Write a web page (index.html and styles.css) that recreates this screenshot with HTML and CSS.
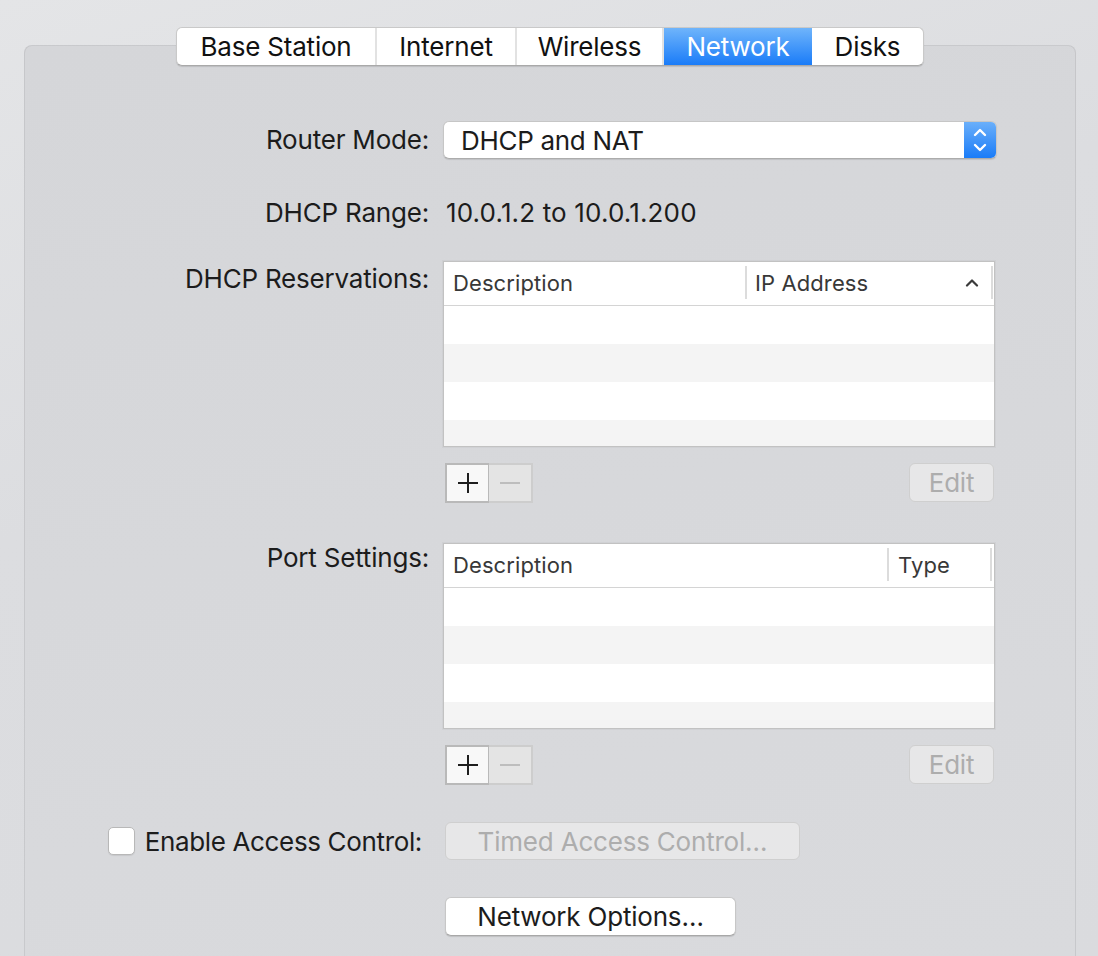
FILE: index.html
```html
<!DOCTYPE html>
<html lang="en">
<head>
<meta charset="utf-8">
<title>Network</title>
<link rel="stylesheet" href="styles.css">
</head>
<body>
<div class="window">
  <nav class="tabs">
    <span class="tab">Base Station</span>
    <span class="tab">Internet</span>
    <span class="tab">Wireless</span>
    <span class="tab tab-active">Network</span>
    <span class="tab tab-last">Disks</span>
  </nav>
  <section class="panel">
    <div class="row row-router">
      <div class="lbl">Router Mode:</div>
      <div class="select">
        <span class="select-text">DHCP and NAT</span>
        <span class="select-arrows">
          <svg width="14" height="26" viewBox="0 0 14 26"><path d="M2 8 L7 3 L12 8" fill="none" stroke="#fff" stroke-width="2.4" stroke-linecap="round" stroke-linejoin="round"/><path d="M2 18 L7 23 L12 18" fill="none" stroke="#fff" stroke-width="2.4" stroke-linecap="round" stroke-linejoin="round"/></svg>
        </span>
      </div>
    </div>

    <div class="row row-range">
      <div class="lbl">DHCP Range:</div>
      <div class="value">10.0.1.2 to 10.0.1.200</div>
    </div>

    <div class="row row-table row-res">
      <div class="lbl lbl-res">DHCP Reservations:</div>
      <div class="table-block">
        <div class="table">
          <div class="thead">
            <div class="th th-desc th-desc-res">Description</div>
            <div class="th th-ip">IP Address
              <svg class="caret" width="14" height="9" viewBox="0 0 14 9"><path d="M2 7.5 L7 2.5 L12 7.5" fill="none" stroke="#3a3a3a" stroke-width="2.2" stroke-linecap="round" stroke-linejoin="round"/></svg>
            </div>
            <div class="th th-end"></div>
          </div>
          <div class="tr"></div>
          <div class="tr tr-alt"></div>
          <div class="tr"></div>
          <div class="tr tr-alt tr-part"></div>
        </div>
        <div class="controls">
          <div class="pm">
            <span class="pm-btn pm-add">
              <svg width="24" height="24" viewBox="0 0 24 24"><path d="M12 2 V22 M2 12 H22" stroke="#1e1e1e" stroke-width="2"/></svg>
            </span>
            <span class="pm-btn pm-remove">
              <svg width="24" height="24" viewBox="0 0 24 24"><path d="M2 12 H22" stroke="#bdbdbd" stroke-width="2"/></svg>
            </span>
          </div>
          <span class="btn btn-disabled btn-edit">Edit</span>
        </div>
      </div>
    </div>

    <div class="row row-table row-port">
      <div class="lbl lbl-port">Port Settings:</div>
      <div class="table-block">
        <div class="table">
          <div class="thead">
            <div class="th th-desc th-desc-port">Description</div>
            <div class="th th-type">Type</div>
            <div class="th th-end"></div>
          </div>
          <div class="tr"></div>
          <div class="tr tr-alt"></div>
          <div class="tr"></div>
          <div class="tr tr-alt tr-part"></div>
        </div>
        <div class="controls">
          <div class="pm">
            <span class="pm-btn pm-add">
              <svg width="24" height="24" viewBox="0 0 24 24"><path d="M12 2 V22 M2 12 H22" stroke="#1e1e1e" stroke-width="2"/></svg>
            </span>
            <span class="pm-btn pm-remove">
              <svg width="24" height="24" viewBox="0 0 24 24"><path d="M2 12 H22" stroke="#bdbdbd" stroke-width="2"/></svg>
            </span>
          </div>
          <span class="btn btn-disabled btn-edit">Edit</span>
        </div>
      </div>
    </div>

    <div class="row row-access">
      <div class="access">
        <span class="checkbox"></span>
        <span class="access-text">Enable Access Control:</span>
      </div>
      <div class="cell">
        <span class="btn btn-disabled btn-timed">Timed Access Control…</span>
      </div>
    </div>

    <div class="row row-options">
      <div></div>
      <div class="cell">
        <span class="btn btn-options">Network Options…</span>
      </div>
    </div>
  </section>
</div>
</body>
</html>
```

FILE: styles.css
```css
* { box-sizing: border-box; }

html, body {
  margin: 0;
  height: 100%;
}

body {
  background: linear-gradient(160deg, #e4e5e7 0%, #dcdde0 40%, #dadbde 100%);
  font-family: "Inter", "Liberation Sans", sans-serif;
  color: #1c1c1c;
  overflow: hidden;
}

.window {
  height: 100%;
  display: flex;
  flex-direction: column;
  padding: 27px 22px 0 24px;
}

/* ---------- tabs ---------- */
.tabs {
  position: relative;
  z-index: 1;
  display: flex;
  width: max-content;
  margin: 0 auto;
  height: 39px;
  flex: none;
  background: #fff;
  border-radius: 6px;
  border: 1px solid #c9c9c9;
  border-bottom-color: #a9a9a9;
  box-shadow: 0 1px 1px rgba(0, 0, 0, 0.12);
  overflow: hidden;
}

.tab {
  display: flex;
  align-items: center;
  justify-content: center;
  height: 100%;
  font-size: 26px;
  letter-spacing: -0.2px;
  border-right: 2px solid #e2e2e2;
  color: #111;
}
.tab:nth-child(1) { width: 200px; }
.tab:nth-child(2) { width: 140px; }
.tab:nth-child(3) { width: 147px; }
.tab:nth-child(4) { width: 148px; }
.tab:nth-child(5) { width: 111px; }

.tab-last { border-right: none; }

.tab-active {
  background: linear-gradient(#6fb4fb, #1a7cf8);
  color: #fff;
  border-right: none;
}

/* ---------- panel ---------- */
.panel {
  flex: 1;
  margin-top: -21px;
  background: linear-gradient(170deg, #d5d6d9, #d7d8db 50%, #d9dadd);
  border: 1px solid rgba(0, 0, 0, 0.07);
  border-bottom: none;
  border-radius: 8px 8px 0 0;
  padding-top: 75px;
}

.row {
  display: grid;
  grid-template-columns: 404px 554px;
  column-gap: 14px;
}

.lbl {
  font-size: 26px;
  text-align: right;
  line-height: 30px;
  letter-spacing: -0.2px;
}

.row-router .lbl { line-height: 38px; }

.row-range { margin-top: 39px; }
.row-res { margin-top: 33px; }
.row-port { margin-top: 40px; }
.row-access { margin-top: 37px; }
.row-options { margin-top: 37px; }

.lbl-res { padding-top: 3px; }
.lbl-port { padding-top: 0; }

.value {
  font-size: 26px;
  line-height: 30px;
  padding-left: 3px;
  letter-spacing: 0.15px;
}

/* ---------- select ---------- */
.select {
  display: flex;
  height: 38px;
  background: #fff;
  border: 1px solid #c6c6c6;
  border-bottom-color: #acacac;
  border-radius: 6px;
  box-shadow: 0 1px 1px rgba(0, 0, 0, 0.1);
  overflow: hidden;
}

.select-text {
  flex: 1;
  font-size: 26px;
  line-height: 37px;
  padding-left: 17px;
  letter-spacing: -0.3px;
}

.select-arrows {
  width: 32px;
  display: flex;
  align-items: center;
  justify-content: center;
  background: linear-gradient(#6aaffa, #1a7cf8);
}

/* ---------- tables ---------- */
.table-block {
  width: 552px;
}

.table {
  height: 186px;
  background: #fff;
  border: 1px solid #c2c2c2;
  box-shadow: 0 0 0 1px rgba(0, 0, 0, 0.03);
  overflow: hidden;
}

.thead {
  display: flex;
  height: 44px;
  border-bottom: 1px solid #d4d4d4;
  padding: 4px 0 6px;
}

.th {
  display: flex;
  align-items: center;
  font-size: 22px;
  color: #383838;
  border-right: 2px solid #dcdcdc;
  letter-spacing: 0.1px;
}

.th-desc { padding-left: 9px; }
.th-desc-res { width: 303px; }
.th-desc-port { width: 445px; }

.th-ip {
  width: 246px;
  padding-left: 8px;
  justify-content: space-between;
  padding-right: 12px;
}

.th-type {
  width: 103px;
  padding-left: 9px;
}

.th-end {
  border-right: none;
  flex: 1;
}

.caret { display: block; }

.tr { height: 38px; }
.tr-alt { background: #f4f4f4; }
.tr-part { height: 26px; }

.controls {
  display: flex;
  justify-content: space-between;
  align-items: flex-start;
  margin-top: 16px;
}

.pm {
  display: flex;
  margin-left: 2px;
}

.pm-btn {
  width: 44px;
  height: 40px;
  display: flex;
  align-items: center;
  justify-content: center;
}

.pm-add {
  background: #f8f8f8;
  border: 2px solid #b9b9b9;
  border-right-width: 1px;
}

.pm-remove {
  background: #e4e4e4;
  border: 2px solid #cdcdcd;
  border-left: none;
}

/* ---------- buttons ---------- */
.btn {
  display: flex;
  align-items: center;
  justify-content: center;
  font-size: 26px;
  border-radius: 6px;
  letter-spacing: -0.2px;
}

.btn-disabled {
  background: #e7e7e8;
  border: 1px solid #cfcfcf;
  color: #adadad;
}

.btn-edit {
  width: 85px;
  height: 39px;
  margin-right: 1px;
}

.cell {
  display: flex;
  padding-left: 2px;
}

.btn-timed {
  width: 355px;
  height: 38px;
}

.btn-options {
  width: 291px;
  height: 39px;
  background: #fff;
  border: 1px solid #c7c7c7;
  border-bottom-color: #a8a8a8;
  box-shadow: 0 1px 1px rgba(0, 0, 0, 0.12);
  color: #1c1c1c;
}

/* ---------- access ---------- */
.access {
  display: flex;
  align-items: center;
  justify-content: flex-end;
  padding-right: 7px;
  gap: 10px;
}

.checkbox {
  width: 27px;
  height: 28px;
  background: #fff;
  border: 1px solid #b8b8b8;
  border-radius: 5px;
  box-shadow: 0 1px 1px rgba(0, 0, 0, 0.08);
}

.access-text {
  font-size: 26px;
  letter-spacing: -0.35px;
}
```
